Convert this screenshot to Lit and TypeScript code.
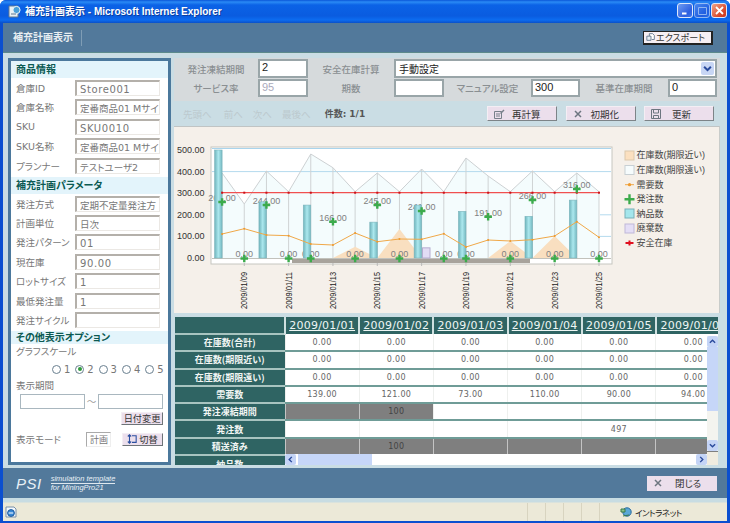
import { LitElement, css, html, svg } from "lit";
import { customElement } from "lit/decorators.js";

const DAY_X = (i: number) => 222.1 + i * 22.17;
const VAL_Y = (v: number) => 258 - v * 0.216;
const BASE = 258;

const FAR_Y = [173, 204, 171, 191.7, 154, 167.7, 191.7, 173, 191.7, 169, 191.7, 158, 176, 191.7, 171, 191.7, 173, 191.7];
const DEMAND_Y = [234, 228.7, 235, 235.7, 244, 245, 233, 241.7, 239, 239.3, 233.7, 247, 240, 241, 239.7, 236, 221.7, 237.3];
const NEAR_PEAKS = [
  [6, 246.7],
  [8, 229],
  [13, 241],
  [15, 236],
];
const BARS = [
  [0, 500],
  [2, 260],
  [4, 245],
  [7, 166],
  [9, 245],
  [11, 216],
  [14, 193],
  [16, 268],
];
const ORDERS: [number, number, string][] = [
  [0, 202, "261.00"],
  [1, 258.5, "0.00"],
  [2, 205, "244.00"],
  [3, 258.5, "0.00"],
  [4, 258.5, "0.00"],
  [5, 221.7, "166.00"],
  [6, 258.5, "0.00"],
  [7, 205, "245.00"],
  [8, 258.5, "0.00"],
  [9, 211, "241.00"],
  [10, 258.5, "0.00"],
  [11, 258.5, "0.00"],
  [12, 216.7, "191.00"],
  [13, 258.5, "0.00"],
  [14, 200, "266.00"],
  [15, 258.5, "0.00"],
  [16, 189, "316.00"],
  [17, 258.5, "0.00"],
];
const TICKS = ["09", "11", "13", "15", "17", "19", "21", "23", "25"];
const LEGEND = ["在庫数(期限近い)", "在庫数(期限遠い)", "需要数", "発注数", "納品数", "廃棄数", "安全在庫"];
const LEGEND_Y = [155.3, 169.7, 184.7, 199.3, 213.7, 228.3, 243];

const PRODUCT = [
  ["倉庫ID", "Store001"],
  ["倉庫名称", "定番商品01 Mサイ"],
  ["SKU", "SKU0010"],
  ["SKU名称", "定番商品01 Mサイ"],
  ["プランナー", "テストユーザ2"],
];
const PARAMS = [
  ["発注方式", "定期不定量発注方"],
  ["計画単位", "日次"],
  ["発注パターン", "01"],
  ["現在庫", "90.00"],
  ["ロットサイズ", "1"],
  ["最低発注量", "1"],
  ["発注サイクル", ""],
];
const DATES = ["2009/01/01", "2009/01/02", "2009/01/03", "2009/01/04", "2009/01/05", "2009/01/06"];
type Cell = string | { gray: true; text?: string };
const G: Cell = { gray: true };
const ROWS: [string, Cell[]][] = [
  ["在庫数(合計)", ["0.00", "0.00", "0.00", "0.00", "0.00", "0.00"]],
  ["在庫数(期限近い)", ["0.00", "0.00", "0.00", "0.00", "0.00", "0.00"]],
  ["在庫数(期限遠い)", ["0.00", "0.00", "0.00", "0.00", "0.00", "0.00"]],
  ["需要数", ["139.00", "121.00", "73.00", "110.00", "90.00", "94.00"]],
  ["発注凍結期間", [G, { gray: true, text: "100" }, "", "", "", ""]],
  ["発注数", ["", "", "", "", "497", ""]],
  ["積送済み", [G, { gray: true, text: "100" }, G, G, G, G]],
  ["納品数", ["", "", "", "", "", ""]],
];

const iconCalc = html`<svg class="ico" viewBox="0 0 12 12"><path d="M1.5 3.5h7v7h-7z M3 6h4 M3 8h4" fill="none" stroke="#77808a"/><path d="M7 5l3.5-3.5 1 1L8 6z" fill="#77808a"/></svg>`;
const iconX = html`<svg class="ico" viewBox="0 0 12 12"><path d="M3 3l6 6M9 3l-6 6" stroke="#6d7680" stroke-width="1.5"/></svg>`;
const iconSave = html`<svg class="ico" viewBox="0 0 12 12"><path d="M1.5 1.5h9v9h-9z" fill="none" stroke="#6d7680"/><path d="M3.5 2v3h5V2M3.5 10V7.5h5V10" fill="none" stroke="#6d7680"/></svg>`;

// latin values are spaced out like the original bitmap font, long japanese ones are not
const valClass = (v: string) => (/^[\x00-\x7f]*$/.test(v) ? "val latin" : "val");

@customElement("app-root")
export class AppRoot extends LitElement {
  static styles = css`
    :host {
      display: block;
      width: 730px;
      height: 523px;
      font: 10px "DejaVu Sans", "Noto Sans CJK JP", sans-serif;
      font-feature-settings: "palt";
      color: #666;
      overflow: hidden;
    }
    * {
      box-sizing: border-box;
    }
    .window {
      width: 730px;
      height: 523px;
      display: flex;
      flex-direction: column;
      background: #0b4fd0;
      padding: 0 3px 2px;
      border-radius: 6px 6px 0 0;
    }
    .titlebar {
      height: 23px;
      margin: 0 -3px;
      padding: 0 3px 2px 8px;
      flex: none;
      display: flex;
      align-items: center;
      gap: 3px;
      border-radius: 6px 6px 0 0;
      background: linear-gradient(#0a56d8 0, #2a8af5 2px, #0b62e6 5px, #0a5ce0 16px, #0c6cf0 20px, #0a50c8 23px);
      color: #fff;
      font: bold 10px "Liberation Sans", "Noto Sans CJK JP", sans-serif;
    }
    .title-icon {
      width: 14px;
      height: 14px;
      flex: none;
    }
    .title-text {
      flex: 1;
      text-shadow: 1px 1px 0 #0a3fa0;
    }
    .win-btns {
      display: flex;
      gap: 1px;
    }
    .win-btn {
      width: 16px;
      height: 15px;
      border: 1px solid #dfe8fb;
      border-radius: 3px;
      background: linear-gradient(135deg, #6f9cf2, #2d5fe0 70%, #3f78ea);
      display: flex;
      align-items: center;
      justify-content: center;
    }
    .win-btn.max {
      opacity: 0.62;
    }
    .win-btn.shut {
      background: linear-gradient(135deg, #f0a58a, #d8482a 70%, #c8361c);
    }
    .win-btn svg {
      width: 11px;
      height: 11px;
    }
    .app {
      flex: 1;
      min-height: 0;
      display: flex;
      flex-direction: column;
      background: #cadde4;
    }
    .header {
      height: 30px;
      flex: none;
      background: #52799b;
      border-bottom: 1px solid #5c8a8c;
      display: flex;
      align-items: center;
      justify-content: space-between;
      padding: 0 14px 0 10px;
    }
    .app-title {
      color: #e8eef2;
      font-weight: bold;
      font-size: 10px;
      padding-right: 8px;
      border-right: 1px solid #7f9db5;
      line-height: 16px;
    }
    .btn {
      display: flex;
      align-items: center;
      background: #ecdfec;
      border: 1px solid #f4eef4;
      border-right: 1px solid #7d8488;
      border-bottom: 1px solid #7d8488;
      color: #444;
      font-size: 9.5px;
      white-space: nowrap;
    }
    .ico {
      width: 12px;
      height: 12px;
      flex: none;
    }
    .export {
      width: 70px;
      height: 14px;
      border: 1px solid #222;
      border-right-width: 2px;
      border-bottom-width: 2px;
      background: #f6eff4;
      padding-left: 2px;
      gap: 0;
      color: #333;
      font-size: 9px;
    }
    .export .ico {
      width: 10px;
      height: 10px;
    }
    .body {
      flex: 1;
      min-height: 0;
      display: flex;
      padding: 5px 7px 0 5px;
      gap: 3px;
    }
    .side {
      width: 163px;
      height: 407px;
      flex: none;
      border: 3px solid #4b789c;
      background: #fff;
      display: flex;
      flex-direction: column;
    }
    .sec {
      height: 17px;
      flex: none;
      background: #e3f4fb;
      color: #0b5a52;
      font-weight: bold;
      font-size: 10px;
      line-height: 17px;
      padding-left: 5px;
    }
    .sec.small {
      height: 13px;
      line-height: 13px;
    }
    .rows {
      display: flex;
      flex-direction: column;
      gap: 3.4px;
      padding: 2px 0 3px 5px;
    }
    .row {
      height: 16px;
      display: flex;
      align-items: center;
      color: #777;
      font-size: 9.5px;
    }
    .row label {
      width: 59px;
      flex: none;
      white-space: nowrap;
    }
    .val {
      width: 85px;
      height: 16px;
      flex: none;
      border: 2px solid #b4b0aa;
      border-right: 1px solid #ebe8e4;
      border-bottom: 1px solid #ebe8e4;
      font-size: 9.5px;
      line-height: 15px;
      padding-left: 3px;
      overflow: hidden;
      white-space: nowrap;
      color: #777;
    }
    .val.latin {
      font-size: 10px;
      letter-spacing: 0.6px;
    }
    .opt {
      flex: 1;
      color: #777;
      font-size: 9.5px;
      padding: 0 5px;
    }
    .opt-line {
      height: 15px;
      line-height: 15px;
    }
    .radios {
      display: grid;
      grid-template-columns: repeat(5, 23.3px);
      height: 15px;
      margin: 3px 0 1px;
      padding-left: 36px;
      font-size: 10px;
    }
    .radio-item {
      display: flex;
      align-items: center;
      gap: 3px;
    }
    .radio {
      width: 9px;
      height: 9px;
      border-radius: 50%;
      border: 1px solid #6a8090;
      background: #fff;
      display: flex;
      align-items: center;
      justify-content: center;
    }
    .radio.on::after {
      content: "";
      width: 4px;
      height: 4px;
      border-radius: 50%;
      background: #2f9a3c;
    }
    .period {
      display: flex;
      align-items: center;
      padding-left: 4px;
      margin-top: 1px;
    }
    .date {
      width: 65px;
      height: 15px;
      border: 1px solid #a9b7bf;
      flex: none;
    }
    .tilde {
      width: 14px;
      text-align: center;
      color: #999;
    }
    .side-btn {
      width: 42px;
      height: 13px;
      background: #ecdfec;
      border: 1px solid #f4eef4;
      border-right: 1px solid #6e7478;
      border-bottom: 1px solid #6e7478;
      color: #333;
      font-size: 9.2px;
      justify-content: center;
      gap: 2px;
    }
    .side-btn .ico {
      width: 10px;
      height: 10px;
    }
    .date-btn-wrap {
      display: flex;
      justify-content: flex-end;
      margin-top: 3px;
    }
    .mode {
      display: flex;
      align-items: center;
      margin-top: 7px;
    }
    .mode label {
      width: 70px;
      flex: none;
    }
    .mode .val {
      width: 25px;
      height: 15px;
      margin-right: 11px;
      border-width: 1px;
      border-color: #aaa #eee #eee #aaa;
      font-size: 9px;
    }
    .main {
      flex: 1;
      min-width: 0;
      display: flex;
      flex-direction: column;
    }
    .form {
      height: 43px;
      flex: none;
      background: #d6dadc;
      padding: 1px 3px 0 0;
      display: flex;
      flex-direction: column;
      gap: 3px;
      color: #8a8f92;
      font-size: 9.5px;
    }
    .form-row {
      display: grid;
      height: 17px;
      align-items: center;
    }
    .form-row.one {
      grid-template-columns: 84px 50px 86px 1fr;
    }
    .form-row.two {
      grid-template-columns: 84px 50px 86px 50px 87px 49px 88px 49px;
      height: 18px;
    }
    .lbl {
      text-align: center;
      white-space: nowrap;
      font-weight: 500;
    }
    .box {
      height: 100%;
      background: #fff;
      border: 2px solid #99a5a8;
      color: #222;
      font: 11px "Liberation Sans", sans-serif;
      padding-left: 2px;
      line-height: 13px;
    }
    .box.off {
      color: #aab;
    }
    .select {
      display: flex;
      align-items: center;
      justify-content: space-between;
      font: 10px "DejaVu Sans", "Noto Sans CJK JP", sans-serif;
      padding: 0 1px 0 3px;
    }
    .arrow {
      width: 13px;
      height: 13px;
      background: #c8d6f4;
      border-radius: 2px;
      display: flex;
      align-items: center;
      justify-content: center;
    }
    .arrow svg {
      width: 9px;
      height: 9px;
    }
    .nav {
      height: 25px;
      flex: none;
      display: flex;
      align-items: center;
      padding-left: 9px;
      color: #bcc9ce;
      font-size: 9.5px;
    }
    .nav span {
      white-space: nowrap;
    }
    .nav .first {
      margin-left: 12px;
    }
    .nav .next {
      margin-left: 10px;
    }
    .nav .count {
      color: #555;
      margin-left: 14px;
      font-weight: bold;
      font-size: 9px;
    }
    .nav-btns {
      margin-left: auto;
      margin-right: 6px;
      display: flex;
      gap: 8.5px;
    }
    .nav-btn {
      width: 70px;
      height: 15px;
      padding-left: 5px;
      gap: 7px;
      color: #333;
    }
    .nav-btn.wide {
      gap: 10px;
    }
    .chart {
      height: 187px;
      flex: none;
      background: #f5f0ea;
      border-top: 1px solid #c0c4c4;
      border-right: 1px solid #c8ccca;
    }
    .chart svg {
      display: block;
      width: 545px;
      height: 186px;
    }
    .chart text {
      font-family: "Liberation Sans", "Noto Sans CJK JP", sans-serif;
    }
    .grid-wrap {
      position: relative;
      flex: 1;
      min-height: 0;
      margin: 4px 2px 0 1px;
      overflow: hidden;
      background: #fff;
    }
    table {
      border-collapse: collapse;
      table-layout: fixed;
      width: 555.2px;
    }
    th.date-h {
      height: 17px;
      background: #2f6463;
      color: #eef6f4;
      font: 11px "DejaVu Sans", sans-serif;
      letter-spacing: 0.25px;
      text-decoration: underline;
      border-left: 2px solid #cfe0e0;
      white-space: nowrap;
      overflow: hidden;
      padding: 0;
    }
    th.corner {
      background: #2f6463;
    }
    th.r {
      height: 17.3px;
      background: #2f6463;
      color: #f2f6f4;
      font: bold 9px "Noto Sans CJK JP", sans-serif;
      border-top: 2px solid #a8c4c0;
      padding: 0;
      white-space: nowrap;
    }
    td {
      height: 17.3px;
      text-align: center;
      color: #666;
      padding: 0;
      font: 8px "DejaVu Sans", sans-serif;
      letter-spacing: 0.3px;
      border-left: 1px solid #eef0ee;
      border-bottom: 2px solid #6f9c97;
    }
    td.gray {
      background: #7f7f7f;
      color: #444;
      border-left: 1px solid #c4c4c4;
    }
    .vbar {
      position: absolute;
      top: 19px;
      right: 0;
      width: 11px;
      height: 115px;
      background: #f4f4ef;
      display: flex;
      flex-direction: column;
    }
    .hbar {
      position: absolute;
      left: 110px;
      right: 11px;
      bottom: 0;
      height: 11px;
      background: #fff;
      display: flex;
    }
    .corner-fill {
      position: absolute;
      right: 0;
      bottom: 0;
      width: 11px;
      height: 13px;
      background: #f0ece0;
    }
    .thumb-v {
      height: 64px;
      background: #c6d6f8;
    }
    .thumb-h {
      width: 74px;
      margin-left: 2px;
      background: #c6d6f8;
    }
    .sb {
      width: 11px;
      height: 11px;
      flex: none;
      background: #c4d4f6;
      border-radius: 2px;
      display: flex;
      align-items: center;
      justify-content: center;
    }
    .sb svg {
      width: 7px;
      height: 7px;
    }
    .end {
      margin-left: auto;
    }
    .vbar .end {
      margin: auto 0 0;
    }
    .footer {
      height: 30px;
      flex: none;
      margin-top: 3px;
      background: #52799b;
      display: flex;
      align-items: center;
      justify-content: space-between;
      padding: 0 10px 0 13px;
    }
    .brand {
      display: flex;
      align-items: center;
      gap: 9px;
      color: #e8f0f6;
      font-style: italic;
      font-family: "Liberation Sans", sans-serif;
    }
    .psi {
      font-size: 15px;
      letter-spacing: 0.5px;
    }
    .tag {
      font-size: 7.5px;
      line-height: 8px;
    }
    .tag div:first-child {
      border-bottom: 1px solid #dfe8ef;
    }
    .close-btn {
      width: 70px;
      height: 15px;
      padding-left: 5px;
      gap: 11px;
      color: #333;
      border: none;
    }
    .status {
      height: 23px;
      flex: none;
      padding-top: 5px;
      background: linear-gradient(#c8dce2 0, #c8dce2 4px, #ece9d8 5px);
      display: flex;
      align-items: center;
      color: #222;
      font-size: 8.5px;
      padding-left: 2px;
    }
    .status .pane {
      height: 100%;
      border-left: 1px solid #d8d4c0;
      width: 18px;
    }
    .status .fill {
      flex: 1;
    }
    .zone {
      width: 128px;
      display: flex;
      align-items: center;
      gap: 3px;
      padding-left: 20px;
      border-left: 1px solid #d8d4c0;
      height: 100%;
      letter-spacing: -0.5px;
    }
  `;

  private renderChart() {
    const xs = DAY_X;
    const farLine = FAR_Y.map((y, i) => `${xs(i)},${y}`).join(" ");
    const farArea = `${xs(0)},${BASE} ${farLine} ${xs(17)},${BASE}`;
    const demand = DEMAND_Y.map((y, i) => `${xs(i)},${y}`).join(" ");
    return svg`<svg viewBox="174 127 545 186" font-size="9">
      <defs>
        <linearGradient id="bar" x1="0" x2="1" y1="0" y2="0">
          <stop offset="0" stop-color="#6fb4bc"/>
          <stop offset="0.5" stop-color="#ace8ee"/>
          <stop offset="1" stop-color="#74b8c0"/>
        </linearGradient>
      </defs>
      <rect x="211" y="147" width="401" height="117" fill="#fff" stroke="#c6c6c0"/>
      <line x1="212" x2="611" y1="148.5" y2="148.5" stroke="#a9d4ec"/>
      ${[200, 100].map((v) => svg`<line x1="600" x2="611" y1=${VAL_Y(v)} y2=${VAL_Y(v)} stroke="#b4daee"/>`)}
      <polygon points=${farArea} fill="#f4fcfd"/>
      <line x1="212" x2="611" y1=${VAL_Y(400)} y2=${VAL_Y(400)} stroke="#b4daee"/>
      ${FAR_Y.map((y, i) => svg`<line x1=${xs(i)} x2=${xs(i)} y1=${y} y2=${BASE} stroke="#cfd3d4"/>`)}
      <polyline points=${farLine} fill="none" stroke="#cdd1d3"/>
      ${NEAR_PEAKS.map(
        ([i, y]) => svg`<polygon points="${xs(i - 1)},${BASE} ${xs(i)},${y} ${xs(i + 1)},${BASE}" fill="#f9dfc0"/>`
      )}
      <rect x="292" y="259" width="238" height="4" fill="#a8a39c"/>
      <line x1="212" x2="611" y1="258.5" y2="258.5" stroke="#c2c2bc"/>
      ${ORDERS.map(
        ([i, y, t]) => svg`<text x=${xs(i)} y=${t.length > 4 ? y - 1 : y - 1.5} text-anchor="middle" fill="#808080">${t}</text>`
      )}
      ${BARS.map(
        ([i, v]) => svg`<rect x=${xs(i) - 7.5} y=${VAL_Y(v)} width="7.5" height=${BASE - VAL_Y(v)} fill="url(#bar)" stroke="#7cb4bc" stroke-width="0.6"/>`
      )}
      <rect x="422.5" y=${VAL_Y(47)} width="7.5" height=${BASE - VAL_Y(47)} fill="#e2dcf4" stroke="#b4acd0"/>
      <polyline points=${demand} fill="none" stroke="#f0a848"/>
      ${DEMAND_Y.map((y, i) => svg`<circle cx=${xs(i)} cy=${y} r="1" fill="#ee9a2e"/>`)}
      <line x1=${xs(0)} x2=${xs(17)} y1="192.7" y2="192.7" stroke="#f05050" stroke-width="1.2"/>
      ${FAR_Y.map((_, i) => svg`<rect x=${xs(i) - 1} y="191.7" width="2" height="2" fill="#cc1018"/>`)}
      ${ORDERS.map(
        ([i, y]) => svg`<path d="M${xs(i) - 3.8} ${y}h7.6M${xs(i)} ${y - 3.8}v7.6" stroke="#3cab4c" stroke-width="2.4"/>`
      )}
      ${[500, 400, 300, 200, 100, 0].map(
        (v) => svg`<text x="204.5" y=${VAL_Y(v) + 3} text-anchor="end" fill="#333">${v.toFixed(2)}</text>`
      )}
      ${TICKS.map(
        (d, i) =>
          svg`<text transform="translate(${xs(1 + i * 2) + 3} 309) rotate(-90)" font-size="8.5" textLength="37" lengthAdjust="spacingAndGlyphs" fill="#222">2009/01/${d}</text>
          <line x1=${xs(1 + i * 2)} x2=${xs(1 + i * 2)} y1="263" y2="266" stroke="#bbb"/>`
      )}
      <rect x="625" y="151" width="9" height="9" fill="#fbe0c0" stroke="#dcc8ac"/>
      <rect x="625" y="165.5" width="9" height="9" fill="#f6fcfd" stroke="#c8d0d4"/>
      <path d="M625 184.7h9" stroke="#f0a848"/><circle cx="629.5" cy="184.7" r="1.6" fill="#ee9a2e"/>
      <path d="M624.5 199.3h10M629.5 194.3v10" stroke="#3cab4c" stroke-width="2.4"/>
      <rect x="625" y="209" width="9" height="9" fill="#a4e6ec" stroke="#78b0b8"/>
      <rect x="625" y="224" width="9" height="9" fill="#e4def6" stroke="#c0b8d8"/>
      <path d="M625.5 243h8M629.5 240.5v5" stroke="#e01020" stroke-width="2"/>
      ${LEGEND.map((t, i) => svg`<text x="636.5" y=${LEGEND_Y[i] + 3} font-size="9" fill="#444">${t}</text>`)}
    </svg>`;
  }

  render() {
    const chev = (d: string) =>
      html`<svg viewBox="0 0 8 8"><path d=${d} fill="none" stroke="#2a4a9c" stroke-width="1.6"/></svg>`;
    return html`<div class="window">
      <div class="titlebar">
        <svg class="title-icon" viewBox="0 0 14 14">
          <path d="M1 2h9v11H1z" fill="#e8f0f4" stroke="#607890"/>
          <circle cx="8.5" cy="6" r="3.6" fill="#4aa0d8" stroke="#e8f4fa"/>
          <path d="M3 10h5" stroke="#607890"/>
        </svg>
        <span class="title-text">補充計画表示 - Microsoft Internet Explorer</span>
        <div class="win-btns">
          <div class="win-btn"><svg viewBox="0 0 11 11"><path d="M2 8.5h4.5" stroke="#fff" stroke-width="2"/></svg></div>
          <div class="win-btn max"><svg viewBox="0 0 11 11"><path d="M1.5 2.5h8v7h-8z" fill="none" stroke="#dfe8fb"/></svg></div>
          <div class="win-btn shut"><svg viewBox="0 0 11 11"><path d="M2 2l7 7M9 2L2 9" stroke="#fff" stroke-width="1.8"/></svg></div>
        </div>
      </div>
      <div class="app">
        <div class="header">
          <span class="app-title">補充計画表示</span>
          <div class="btn export">
            <svg class="ico" viewBox="0 0 12 12"><path d="M4 5V2h4l2 2v5H7" fill="#fff" stroke="#5a7088"/><path d="M1 5h5v5H1z" fill="#e8eef4" stroke="#5a7088"/></svg>エクスポート
          </div>
        </div>
        <div class="body">
          <aside class="side">
            <div class="sec">商品情報</div>
            <div class="rows">
              ${PRODUCT.map(([l, v]) => html`<div class="row"><label>${l}</label><div class=${valClass(v)}>${v}</div></div>`)}
            </div>
            <div class="sec">補充計画パラメータ</div>
            <div class="rows">
              ${PARAMS.map(([l, v]) => html`<div class="row"><label>${l}</label><div class=${valClass(v)}>${v}</div></div>`)}
            </div>
            <div class="sec small">その他表示オプション</div>
            <div class="opt">
              <div class="opt-line">グラフスケール</div>
              <div class="radios">
                ${[1, 2, 3, 4, 5].map(
                  (n) => html`<div class="radio-item"><span class="radio ${n === 2 ? "on" : ""}"></span><span>${n}</span></div>`
                )}
              </div>
              <div class="opt-line">表示期間</div>
              <div class="period">
                <div class="date"></div>
                <span class="tilde">～</span>
                <div class="date"></div>
              </div>
              <div class="date-btn-wrap"><div class="btn side-btn">日付変更</div></div>
              <div class="mode">
                <label>表示モード</label>
                <div class="val">計画</div>
                <div class="btn side-btn">
                  <svg class="ico" viewBox="0 0 12 12"><path d="M6 2h5v8H6M3 1v10M1 3l2-2 2 2M1 9l2 2 2-2" fill="none" stroke="#2a4fa0" stroke-width="1.3"/></svg>切替
                </div>
              </div>
            </div>
          </aside>
          <div class="main">
            <div class="form">
              <div class="form-row one">
                <span class="lbl">発注凍結期間</span>
                <div class="box">2</div>
                <span class="lbl">安全在庫計算</span>
                <div class="box select">手動設定
                  <span class="arrow"><svg viewBox="0 0 8 8"><path d="M1 2.5l3 3 3-3" fill="none" stroke="#2a4a9c" stroke-width="1.8"/></svg></span>
                </div>
              </div>
              <div class="form-row two">
                <span class="lbl">サービス率</span>
                <div class="box off">95</div>
                <span class="lbl">期数</span>
                <div class="box"></div>
                <span class="lbl">マニュアル設定</span>
                <div class="box">300</div>
                <span class="lbl">基準在庫期間</span>
                <div class="box">0</div>
              </div>
            </div>
            <div class="nav">
              <span>先頭へ</span><span class="first">前へ</span><span class="next">次へ</span><span class="next">最後へ</span>
              <span class="count">件数: 1/1</span>
              <div class="nav-btns">
                <div class="btn nav-btn">${iconCalc}再計算</div>
                <div class="btn nav-btn">${iconX}初期化</div>
                <div class="btn nav-btn wide">${iconSave}更新</div>
              </div>
            </div>
            <div class="chart">${this.renderChart()}</div>
            <div class="grid-wrap">
              <table>
                <colgroup><col style="width:110px" />${DATES.map(() => html`<col style="width:74.2px" />`)}</colgroup>
                <tr>
                  <th class="corner"></th>
                  ${DATES.map((d) => html`<th class="date-h">${d}</th>`)}
                </tr>
                ${ROWS.map(
                  ([h, cells]) => html`<tr>
                    <th class="r">${h}</th>
                    ${cells.map((c) =>
                      typeof c === "string" ? html`<td>${c}</td>` : html`<td class="gray">${c.text ?? ""}</td>`
                    )}
                  </tr>`
                )}
              </table>
              <div class="vbar">
                <div class="sb">${chev("M1 5.5l3-3 3 3")}</div>
                <div class="thumb-v"></div>
                <div class="sb end">${chev("M1 2.5l3 3 3-3")}</div>
              </div>
              <div class="hbar">
                <div class="sb">${chev("M5.5 1l-3 3 3 3")}</div>
                <div class="thumb-h"></div>
                <div class="sb end">${chev("M2.5 1l3 3-3 3")}</div>
              </div>
              <div class="corner-fill"></div>
            </div>
          </div>
        </div>
        <div class="footer">
          <div class="brand">
            <span class="psi">PSI</span>
            <div class="tag"><div>simulation template</div><div>for MiningPro21</div></div>
          </div>
          <div class="btn close-btn">${iconX}閉じる</div>
        </div>
        <div class="status">
          <svg class="ico" viewBox="0 0 12 12"><path d="M1 1h8l2 2v8H1z" fill="#f4f8fc" stroke="#7a90a8"/><circle cx="6" cy="7" r="3.4" fill="#3a8ad8" stroke="#1e5a9c"/><path d="M3.6 7h4.6" stroke="#fff"/></svg>
          <div class="fill"></div>
          <div class="pane"></div><div class="pane"></div><div class="pane"></div><div class="pane"></div>
          <div class="zone">
            <svg class="ico" viewBox="0 0 12 12"><circle cx="7" cy="6" r="4.2" fill="#5aa8d8" stroke="#2a6a9c"/><path d="M1 3h4v3H1zM3 10l6-1" stroke="#3a7a4a" fill="#8ac08a"/></svg>
            イントラネット
          </div>
        </div>
      </div>
    </div>`;
  }
}
